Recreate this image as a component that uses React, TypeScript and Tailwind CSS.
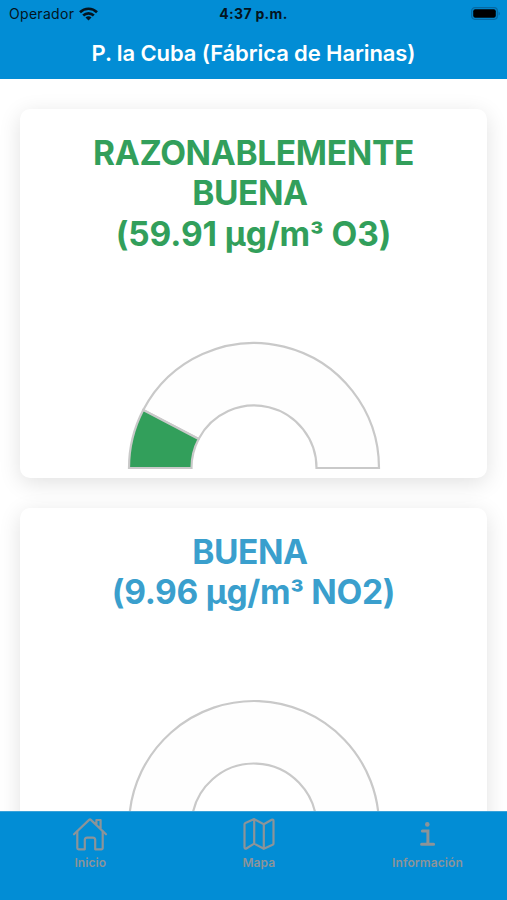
import type { ReactNode } from "react"

type Reading = {
  id: string
  lines: { text: string; unit?: string; className: string }[]
  color: string
  textClass: string
  angle: number
}

const readings: Reading[] = [
  {
    id: "o3",
    lines: [
      { text: "RAZONABLEMENTE", className: "tracking-[-0.35px]" },
      { text: "BUENA", className: "tracking-[-0.45px] pr-[7px]" },
      { text: "(59.91 µg/m", unit: "O3)", className: "tracking-[-0.1px]" },
    ],
    color: "#329f5b",
    textClass: "text-[#329f5b]",
    angle: 27.6,
  },
  {
    id: "no2",
    lines: [
      { text: "BUENA", className: "tracking-[-0.45px] pr-[7px]" },
      { text: "(9.96 µg/m", unit: "NO2)", className: "tracking-[-0.3px]" },
    ],
    color: "#3a9fcd",
    textClass: "text-[#3a9fcd]",
    angle: 4.6,
  },
]

const OUTER = 125
const INNER = 62.5

// slice of the half ring, angles in degrees from the left end
const slice = (from: number, to: number) => {
  const point = (r: number, deg: number) => {
    const rad = (deg * Math.PI) / 180
    return `${127 - r * Math.cos(rad)} ${127 - r * Math.sin(rad)}`
  }
  return `M${point(OUTER, from)} A${OUTER} ${OUTER} 0 0 1 ${point(OUTER, to)} L${point(INNER, to)} A${INNER} ${INNER} 0 0 0 ${point(INNER, from)} Z`
}

const Gauge = ({ angle, color }: { angle: number; color: string }) => (
  <svg width="254" height="129" viewBox="0 0 254 129" className="block shrink-0">
    <path d={slice(angle, 180)} fill="#fefefe" stroke="#c9c9c9" strokeWidth="2.2" />
    <path d={slice(0, angle)} fill={color} stroke="#c9c9c9" strokeWidth="2.2" />
  </svg>
)

const ReadingCard = ({ reading }: { reading: Reading }) => (
  <div className="flex shrink-0 flex-col items-center rounded-[10px] bg-white pt-[24px] pb-[8px] shadow-[0_5px_22px_rgba(0,0,0,0.12)]">
    <h2
      className={`text-center text-[33.5px] leading-[40.3px] font-bold whitespace-nowrap ${reading.textClass}`}
    >
      {reading.lines.map((line) => (
        <span key={line.text} className={`block ${line.className}`}>
          {line.text}
          {line.unit && (
            <>
              <span className="text-[29px] leading-none">³</span> {line.unit}
            </>
          )}
        </span>
      ))}
    </h2>
    <div className="h-[87px]" />
    <Gauge angle={reading.angle} color={reading.color} />
  </div>
)

const WifiIcon = () => (
  <svg width="19" height="14" viewBox="0 0 19 14" className="block">
    <g fill="none" stroke="#041420" strokeWidth="2.6">
      <path d="M1 5.2C5.7.6 13.3.6 18 5.2" />
      <path d="M4.2 8.5C7.2 5.6 11.8 5.6 14.8 8.5" />
    </g>
    <path d="M9.5 13.6 6.5 10.5Q9.5 8 12.5 10.5Z" fill="#041420" />
  </svg>
)

const BatteryIcon = () => (
  <svg width="30" height="13" viewBox="0 0 30 13" className="block">
    <rect x="0.7" y="0.7" width="25.6" height="11.6" rx="3.2" fill="none" stroke="#0669a2" strokeWidth="1.3" />
    <rect x="2.2" y="2.2" width="22.6" height="8.6" rx="2" fill="#000" />
    <path d="M27.6 4.4Q30 6.5 27.6 8.6Z" fill="#0669a2" />
  </svg>
)

const HomeIcon = () => (
  <svg width="36" height="36" viewBox="0 0 36 36" fill="none" stroke="currentColor" strokeWidth="2.2" strokeLinejoin="round" strokeLinecap="round">
    <path d="M5.3 15.5V32a1.3 1.3 0 0 0 1.3 1.3h6.2V24a2.4 2.4 0 0 1 2.4-2.4h5.6a2.4 2.4 0 0 1 2.4 2.4v9.3h6.2a1.3 1.3 0 0 0 1.3-1.3V15.5" />
    <path d="M34 18.3 18.9 3.9a1.3 1.3 0 0 0-1.8 0L2 18.3M28.6 13V4h-4.2v5" />
  </svg>
)

const MapIcon = () => (
  <svg width="36" height="36" viewBox="0 0 36 36" fill="none" stroke="currentColor" strokeWidth="2.2" strokeLinejoin="round" strokeLinecap="round">
    <path d="m22.8 32.8-9.6-5.2-7.9 4.9a1.2 1.2 0 0 1-1.8-1.1V8.3a1.5 1.5 0 0 1 .9-1.4l8.8-3.8 9.6 5.2 7.9-4.6a1.2 1.2 0 0 1 1.8 1.1v22.6a1.5 1.5 0 0 1-.9 1.4ZM13.2 3.1v24.5M22.8 8.3v24.5" />
  </svg>
)

const InfoIcon = () => (
  <svg width="36" height="36" viewBox="0 0 36 36" fill="none" stroke="currentColor" strokeWidth="3" strokeLinecap="round">
    <path d="M13.4 14.9h5.5v13M12.6 28.2h12" />
    <circle cx="18.3" cy="8.4" r="2.3" fill="currentColor" stroke="none" />
  </svg>
)

const Tab = ({ label, icon }: { label: string; icon: ReactNode }) => (
  <div className="flex w-[168.6px] shrink-0 flex-col items-center">
    {icon}
    <span className="mt-[3px] text-[12px] leading-[16px] font-semibold tracking-[0.1px]">{label}</span>
  </div>
)

export default function App() {
  return (
    <div className="flex h-[900px] w-[507px] flex-col overflow-hidden bg-white font-['Inter','Liberation_Sans',sans-serif]">
      <header className="z-10 h-[79px] shrink-0 bg-[#028dd5]">
        <div className="grid h-[27px] grid-cols-[1fr_auto_1fr] items-center px-[9px] text-[#041420]">
          <div className="flex items-center gap-[5px]">
            <span className="text-[14px] tracking-[0.3px]">Operador</span>
            <WifiIcon />
          </div>
          <span className="text-[14px] font-bold tracking-[0.3px]">4:37 p.m.</span>
          <div className="-mr-[3px] flex justify-end">
            <BatteryIcon />
          </div>
        </div>
        <h1 className="text-center text-[22px] leading-[52px] font-semibold tracking-[-0.1px] text-white">
          P. la Cuba (Fábrica de Harinas)
        </h1>
      </header>

      <main className="flex min-h-0 flex-1 flex-col gap-[30px] overflow-hidden px-[20px] pt-[30px]">
        {readings.map((reading) => (
          <ReadingCard key={reading.id} reading={reading} />
        ))}
      </main>

      <nav className="flex h-[89px] shrink-0 border-t border-[#3aa2d9] bg-[#028dd5] pt-[4px] pl-[6px] text-[#8c9499]">
        <Tab label="Inicio" icon={<HomeIcon />} />
        <Tab label="Mapa" icon={<MapIcon />} />
        <Tab label="Información" icon={<InfoIcon />} />
      </nav>
    </div>
  )
}
